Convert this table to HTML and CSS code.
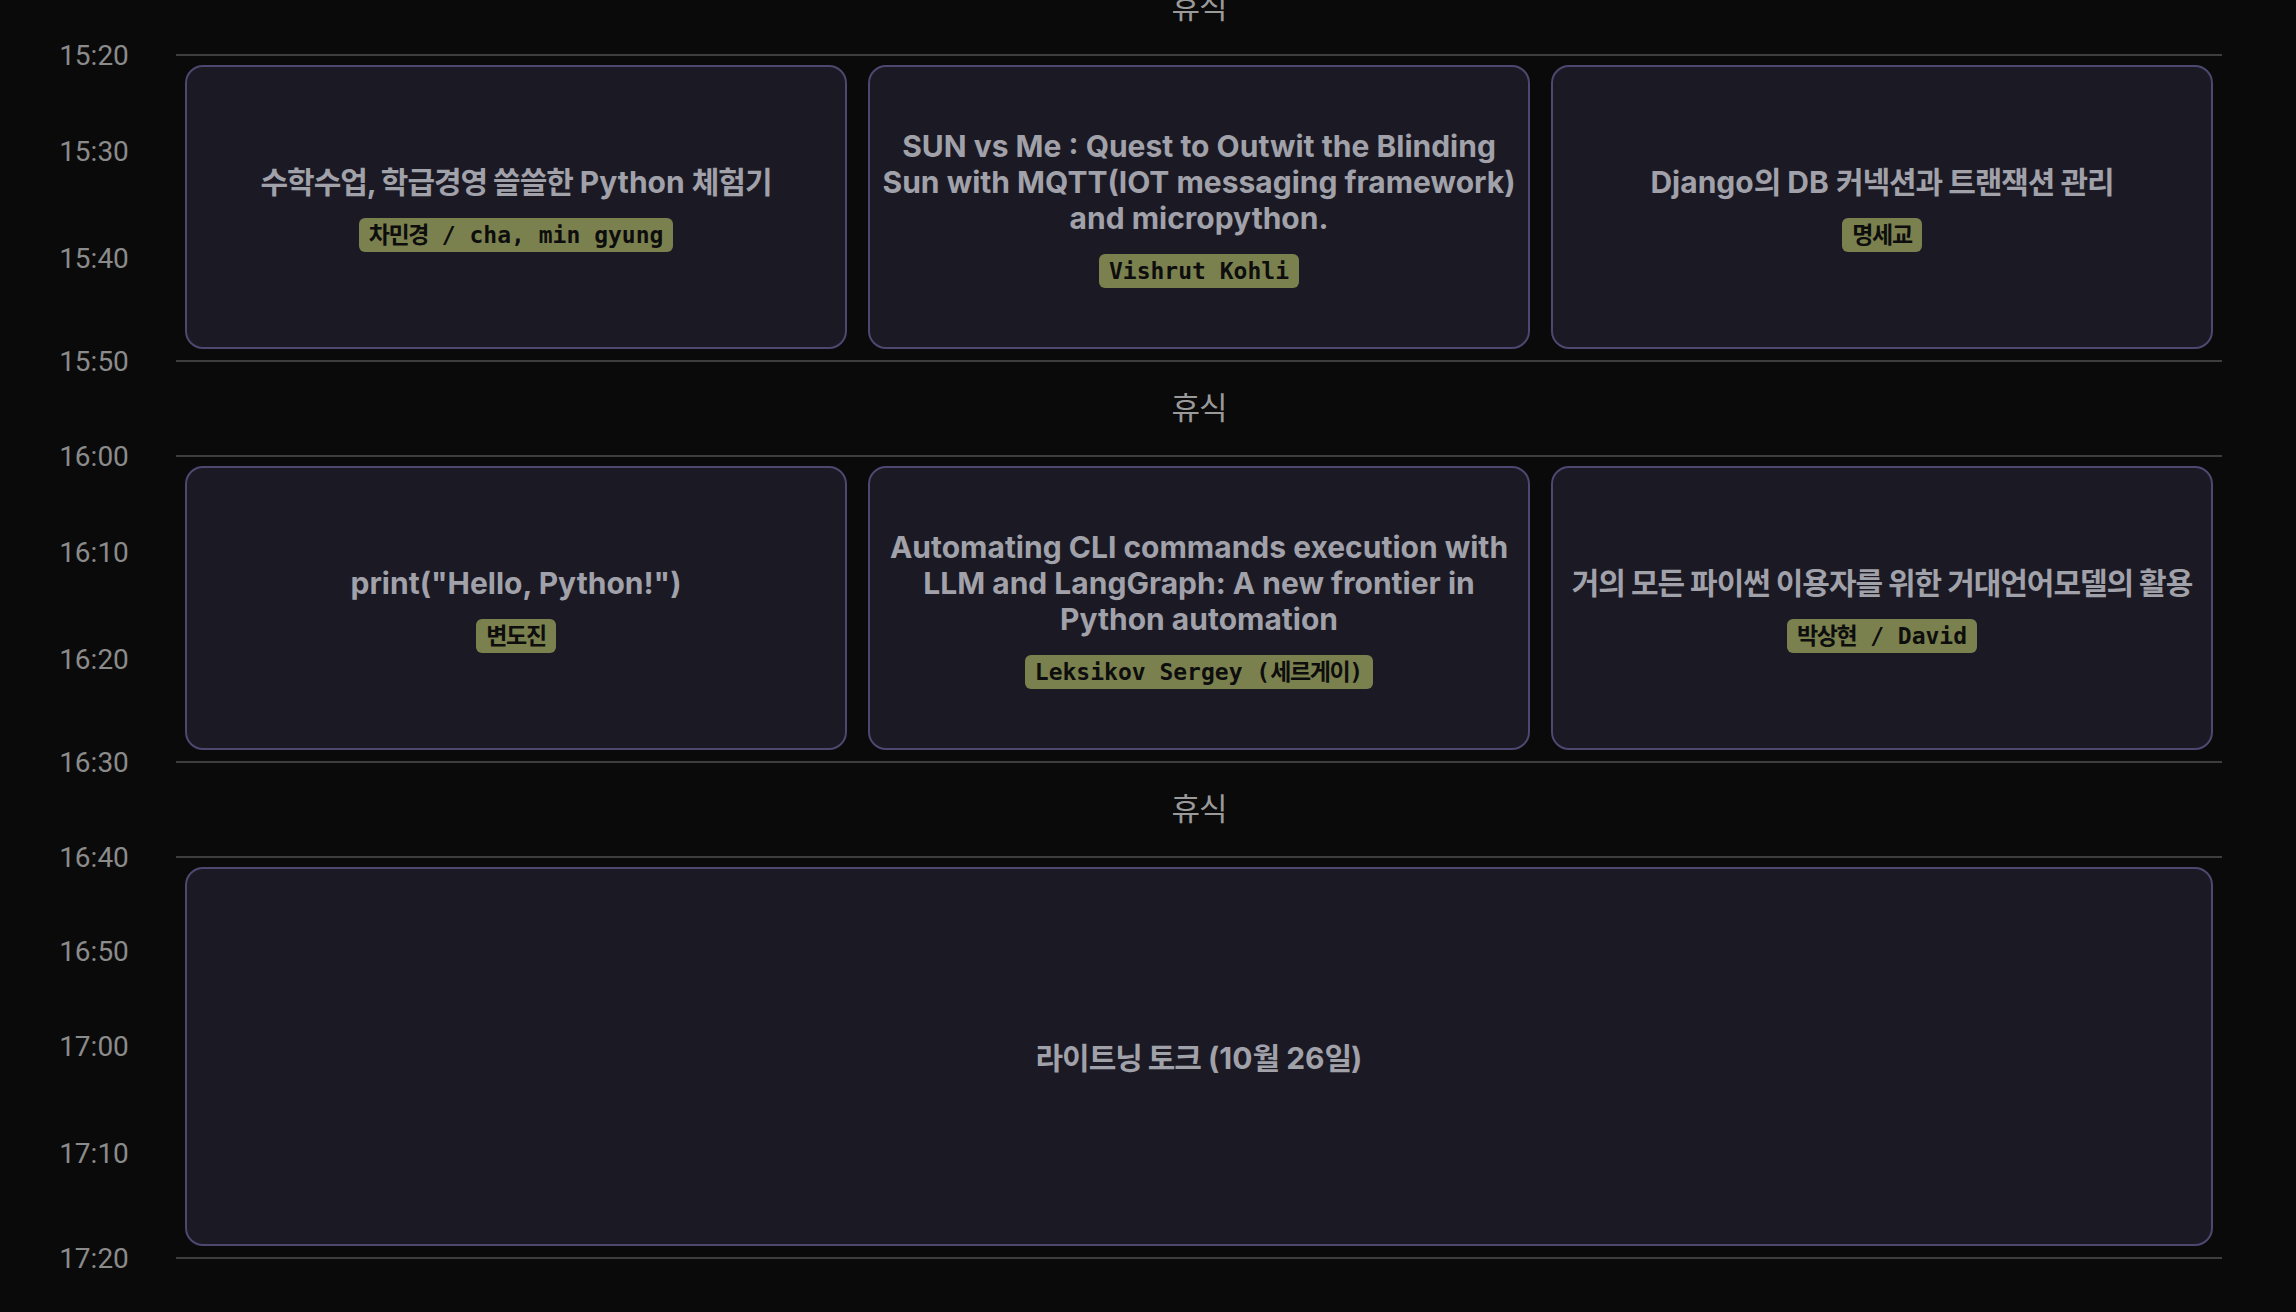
FILE: index.html
```html
<!DOCTYPE html>
<html lang="en">
<head>
  <meta charset="UTF-8">
  <title>Schedule</title>
  <link rel="stylesheet" href="styles.css">
</head>
<body>

<div class="schedule">
  <div class="time">15:10</div>
  <div class="block break"><span lang="ko">휴식</span></div>

  <div class="time">15:20</div>
  <div class="time">15:30</div>
  <div class="time">15:40</div>
  <div class="block session span-3">
    <div class="card">
      <div class="talk-title"><span lang="ko">수학수업, 학급경영 쓸쓸한</span> Python <span lang="ko">체험기</span></div>
      <div class="speaker"><span lang="ko">차민경</span> / cha, min gyung</div>
    </div>
    <div class="card">
      <div class="talk-title">SUN vs Me : Quest to Outwit the Blinding Sun with MQTT(IOT messaging framework) and micropython.</div>
      <div class="speaker">Vishrut Kohli</div>
    </div>
    <div class="card">
      <div class="talk-title">Django<span lang="ko">의</span> DB <span lang="ko">커넥션과 트랜잭션 관리</span></div>
      <div class="speaker"><span lang="ko">명세교</span></div>
    </div>
  </div>

  <div class="time">15:50</div>
  <div class="block break"><span lang="ko">휴식</span></div>

  <div class="time">16:00</div>
  <div class="time">16:10</div>
  <div class="time">16:20</div>
  <div class="block session span-3">
    <div class="card">
      <div class="talk-title">print("Hello, Python!")</div>
      <div class="speaker"><span lang="ko">변도진</span></div>
    </div>
    <div class="card">
      <div class="talk-title">Automating CLI commands execution with LLM and LangGraph: A new frontier in Python automation</div>
      <div class="speaker">Leksikov Sergey (<span lang="ko">세르게이</span>)</div>
    </div>
    <div class="card">
      <div class="talk-title"><span lang="ko">거의 모든 파이썬 이용자를 위한 거대언어모델의 활용</span></div>
      <div class="speaker"><span lang="ko">박상현</span> / David</div>
    </div>
  </div>

  <div class="time">16:30</div>
  <div class="block break"><span lang="ko">휴식</span></div>

  <div class="time">16:40</div>
  <div class="time">16:50</div>
  <div class="time">17:00</div>
  <div class="time">17:10</div>
  <div class="block session single span-4">
    <div class="card">
      <div class="talk-title"><span lang="ko">라이트닝 토크</span> (10<span lang="ko">월</span> 26<span lang="ko">일</span>)</div>
    </div>
  </div>

  <div class="time">17:20</div>
  <div class="block"></div>
</div>

</body>
</html>
```

FILE: styles.css
```css
html, body {
  margin: 0;
  padding: 0;
  background: #0a0a0a;
  overflow: hidden;
}

.schedule {
  display: grid;
  grid-template-columns: 176px 1fr;
  grid-template-rows: 95px 96px 107px 103px 95px 96px 107px 103px 95px 94px 95px 107px 105px 95px;
  grid-auto-flow: row dense;
  margin-top: -41px;
  padding-right: 74px;
}

.time {
  grid-column: 1;
  align-self: start;
  margin-top: 2px;
  padding-left: 12px;
  transform: translateY(-50%);
  text-align: center;
  font-family: Roboto, "Liberation Sans", sans-serif;
  font-size: 28px;
  line-height: 36px;
  color: #8b8b8b;
}

.block {
  grid-column: 2;
  border-top: 2px solid #3d3d3d;
}

.span-3 {
  grid-row: span 3;
}

.span-4 {
  grid-row: span 4;
}

.break {
  display: flex;
  align-items: center;
  justify-content: center;
  padding-bottom: 6px;
  box-sizing: border-box;
  font-family: Inter, "Noto Sans CJK KR", sans-serif;
  font-size: 31px;
  color: #9a9a9a;
}

.session {
  display: grid;
  grid-template-columns: repeat(3, 1fr);
  gap: 21px;
  padding: 9px 9px 11px;
}

.session.single {
  grid-template-columns: 1fr;
}

.card {
  display: flex;
  flex-direction: column;
  align-items: center;
  justify-content: center;
  gap: 18px;
  padding: 2px 8px 0;
  background: #1b1a24;
  border: 2px solid #4c4870;
  border-radius: 18px;
  text-align: center;
}

.talk-title {
  font-family: Inter, "Noto Sans CJK KR", sans-serif;
  font-weight: 700;
  font-size: 30px;
  line-height: 36px;
  color: #a1a1aa;
}

.speaker {
  padding: 0 10px;
  background: #7b804f;
  border-radius: 6px;
  font-family: "DejaVu Sans Mono", "Noto Sans CJK KR", monospace;
  font-weight: 700;
  font-size: 23px;
  line-height: 34px;
  color: #0d0d0d;
}

/* hangul falls back to Noto, which runs wider than the original face */
[lang="ko"] {
  letter-spacing: -0.035em;
}

.speaker [lang="ko"] {
  letter-spacing: -0.06em;
}
```
